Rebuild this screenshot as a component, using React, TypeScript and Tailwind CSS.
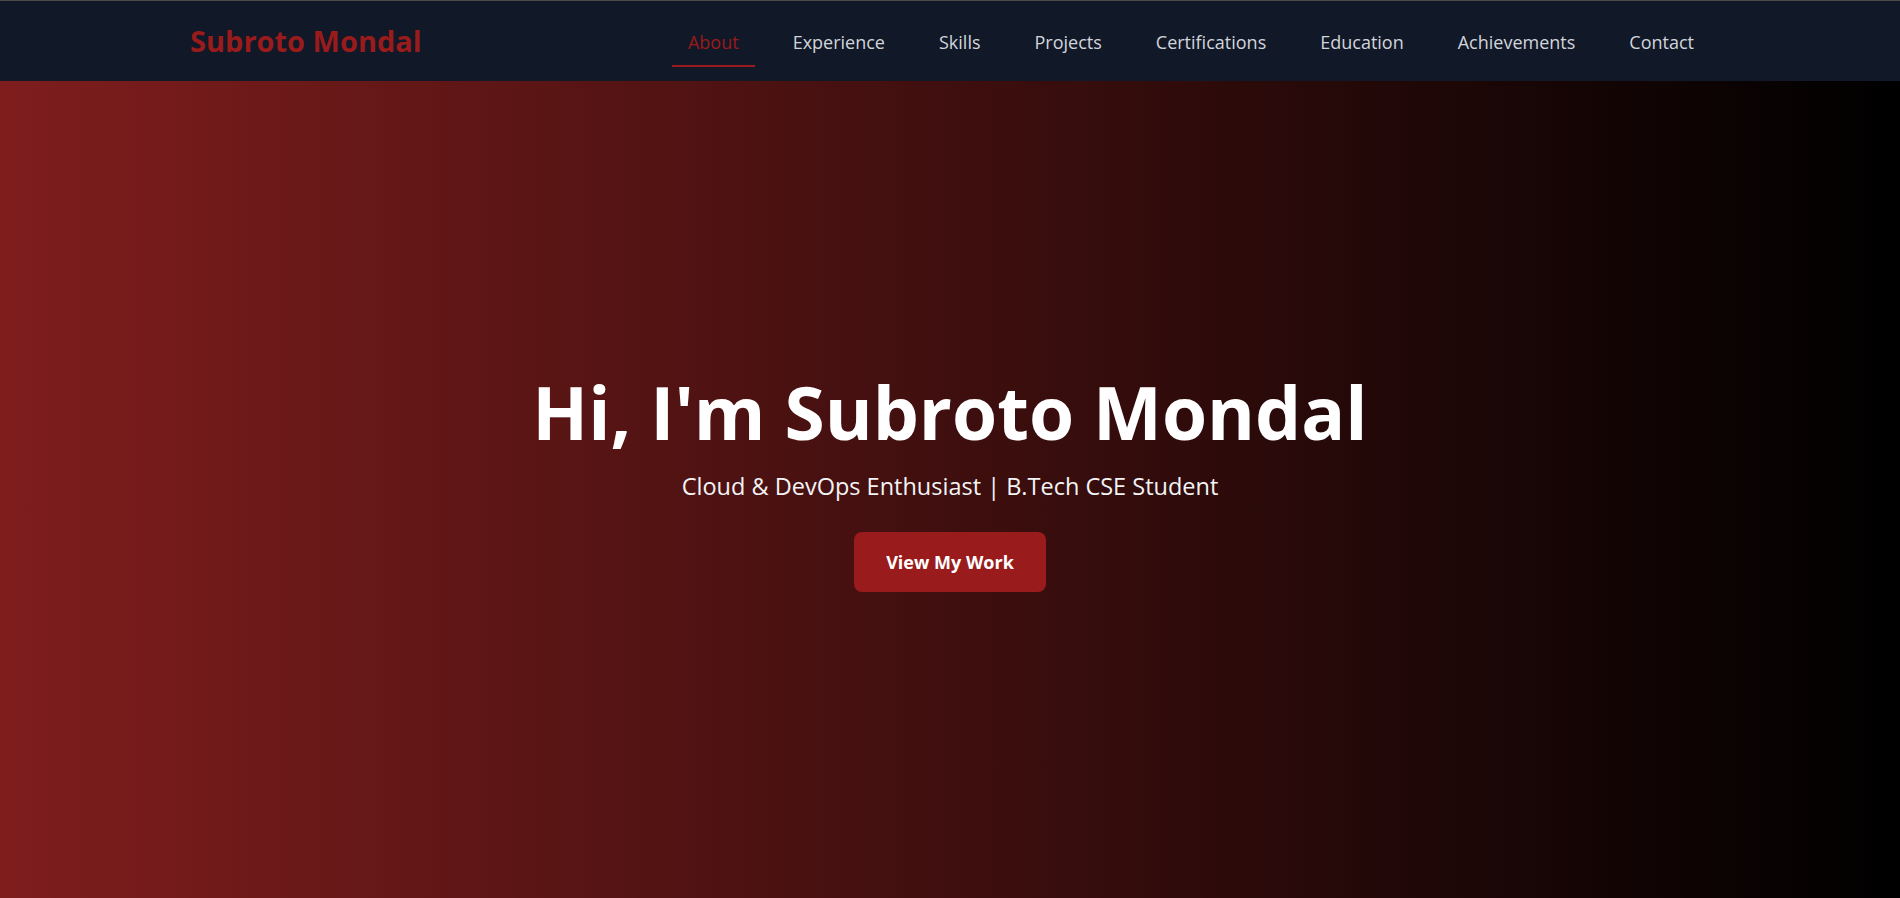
import React from "react";

const links = ["About", "Experience", "Skills", "Projects", "Certifications", "Education", "Achievements", "Contact"];

export default function App() {
  return (
    <div className="flex h-screen flex-col overflow-hidden font-['Open_Sans',sans-serif]">
      <nav className="h-[81px] shrink-0 border-t border-[#4b4b4b] bg-[#111827]">
        <div className="mx-auto flex h-full max-w-[1536px] items-center justify-between px-2">
          <div className="text-[29px] font-bold text-[#991b1b]">Subroto Mondal</div>
          <ul className="flex gap-[22px]">
            {links.map((l, i) => (
              <li key={l}>
                <a
                  className={
                    i === 0
                      ? "block border-b-2 border-[#991b1b] px-4 pt-[13px] pb-[9px] text-lg leading-7 text-[#991b1b]"
                      : "block border-b-2 border-transparent px-4 pt-[13px] pb-[9px] text-lg leading-7 text-[#d1d5db]"
                  }
                >
                  {l}
                </a>
              </li>
            ))}
          </ul>
        </div>
      </nav>
      <section className="flex flex-1 flex-col items-center bg-[linear-gradient(to_right,#7f1d1d,#000000)] pt-[294px] text-white">
        <h1 className="text-[73px] leading-none font-bold">Hi, I'm Subroto Mondal</h1>
        <p className="mt-[22px] text-[23.5px] leading-8 text-[#f3f4f6]">Cloud &amp; DevOps Enthusiast | B.Tech CSE Student</p>
        <button className="mt-[30px] rounded-lg bg-[#991b1b] px-8 py-4 text-lg leading-7 font-bold text-white">View My Work</button>
      </section>
    </div>
  );
}
